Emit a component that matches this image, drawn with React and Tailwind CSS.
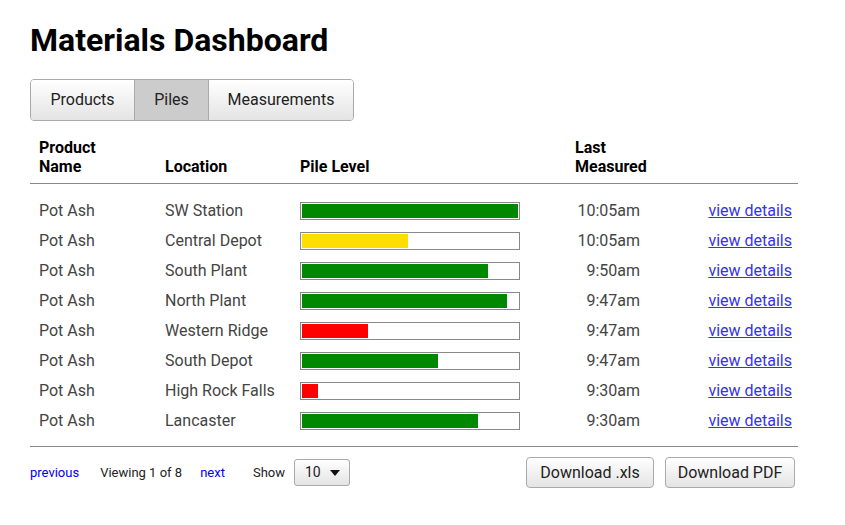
import React from 'react';

const rows = [
  { product: 'Pot Ash', location: 'SW Station', level: 100, color: 'bg-[#008800]', time: '10:05am' },
  { product: 'Pot Ash', location: 'Central Depot', level: 49, color: 'bg-[#ffdd00]', time: '10:05am' },
  { product: 'Pot Ash', location: 'South Plant', level: 86, color: 'bg-[#008800]', time: '9:50am' },
  { product: 'Pot Ash', location: 'North Plant', level: 95, color: 'bg-[#008800]', time: '9:47am' },
  { product: 'Pot Ash', location: 'Western Ridge', level: 30.5, color: 'bg-[#ff0000]', time: '9:47am' },
  { product: 'Pot Ash', location: 'South Depot', level: 63, color: 'bg-[#008800]', time: '9:47am' },
  { product: 'Pot Ash', location: 'High Rock Falls', level: 7.5, color: 'bg-[#ff0000]', time: '9:30am' },
  { product: 'Pot Ash', location: 'Lancaster', level: 81.5, color: 'bg-[#008800]', time: '9:30am' },
];

function LevelBar({ level, color }) {
  return (
    <div className="h-[18px] w-[220px] border border-[#888] bg-white p-px">
      <div className={`h-full ${color}`} style={{ width: `${level}%` }} />
    </div>
  );
}

const gridCols = 'grid grid-cols-[126px_135px_220px_120px_1fr] items-center pl-[9px] pr-[6px]';

export default function App() {
  return (
    <div className="min-h-screen bg-white font-['Roboto',sans-serif] text-black">
      <div className="w-[768px] ml-[30px] pt-[21px]">
        {/* Title */}
        <h1 className="text-[32px] font-bold leading-[38px]">Materials Dashboard</h1>

        {/* Tabs */}
        <div className="mt-[20px] inline-flex h-[42px] overflow-hidden rounded-[4px] border border-[#aaa] text-[16px] text-[#222]">
          <button className="w-[103px] bg-gradient-to-b from-white to-[#e4e4e4]">Products</button>
          <button className="w-[74px] border-l border-[#aaa] bg-[#cccccc]">Piles</button>
          <button className="w-[145px] border-l border-[#aaa] bg-gradient-to-b from-white to-[#e4e4e4]">Measurements</button>
        </div>

        {/* Table header */}
        <div className={`${gridCols} mt-[17px] items-end border-b border-[#888] pb-[7px] text-[16px] font-bold leading-[19px]`}>
          <div>Product<br />Name</div>
          <div>Location</div>
          <div>Pile Level</div>
          <div className="pl-[55px]">Last<br />Measured</div>
          <div />
        </div>

        {/* Rows */}
        <div className="border-b border-[#888] pt-[12px] pb-[10px] text-[16px] text-[#444]">
          {rows.map((row, i) => (
            <div key={i} className={`${gridCols} h-[30px]`}>
              <div>{row.product}</div>
              <div>{row.location}</div>
              <LevelBar level={row.level} color={row.color} />
              <div className="text-right">{row.time}</div>
              <div className="text-right">
                <a href="#" className="text-[#3333ee] underline">view details</a>
              </div>
            </div>
          ))}
        </div>

        {/* Footer */}
        <div className="mt-[10px] flex items-center text-[13px]">
          <a href="#" className="text-[#0000ee]">previous</a>
          <span className="ml-[21px] text-[#222]">Viewing 1 of 8</span>
          <a href="#" className="ml-[18px] text-[#0000ee]">next</a>
          <span className="ml-[28px] text-[#222]">Show</span>
          <div className="ml-[9px] flex h-[27px] w-[56px] items-center justify-between rounded-[3px] border border-[#aaa] bg-gradient-to-b from-white to-[#e4e4e4] pl-[10px] pr-[9px] text-[14px] text-[#222]">
            <span>10</span>
            <svg width="10" height="6" viewBox="0 0 10 6"><path d="M0 0h10L5 6z" fill="#111" /></svg>
          </div>
          <div className="ml-auto flex gap-[11px] pr-[3px]">
            <button className="h-[31px] w-[128px] rounded-[4px] border border-[#aaa] bg-gradient-to-b from-white to-[#e4e4e4] text-[16px] text-[#222]">Download .xls</button>
            <button className="h-[31px] w-[130px] rounded-[4px] border border-[#aaa] bg-gradient-to-b from-white to-[#e4e4e4] text-[16px] text-[#222]">Download PDF</button>
          </div>
        </div>
      </div>
    </div>
  );
}
